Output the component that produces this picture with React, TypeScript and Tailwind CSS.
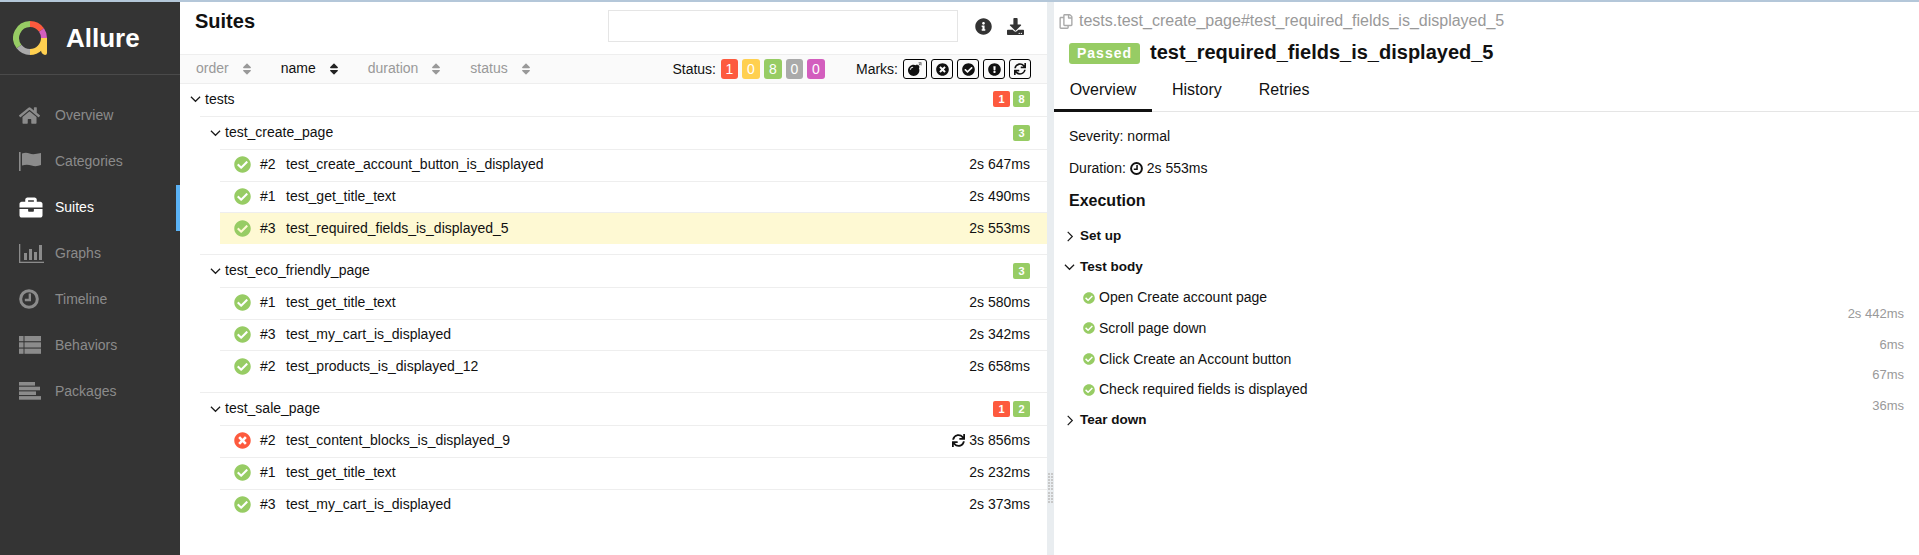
import React from "react";
import {
  FaHome, FaBriefcase,
  FaCheckCircle, FaTimesCircle, FaBomb, FaExclamationCircle, FaSync, FaInfoCircle,
  FaDownload, FaRegCopy, FaSort,
} from "react-icons/fa";

function FlagIcon() {
  return (
    <svg viewBox="0 0 22 19" className="w-[22px] h-[19px]" fill="currentColor">
      <rect x="0" y="0" width="1.6" height="19" />
      <path d="M3 1.5 Q7 0 10.5 1.5 T22 1 V13 Q17 15 12.5 13.5 T3 13.5Z" />
    </svg>
  );
}
function GraphIcon() {
  return (
    <svg viewBox="0 0 25 19" className="w-[25px] h-[19px]" fill="currentColor">
      <rect x="0" y="0" width="1.3" height="19" />
      <rect x="0" y="17.7" width="25" height="1.3" />
      <rect x="5" y="9" width="3" height="7" />
      <rect x="10" y="5" width="3" height="11" />
      <rect x="15" y="8" width="3" height="8" />
      <rect x="20" y="1" width="3" height="15" />
    </svg>
  );
}
function ClockIcon({ className = "w-[20px] h-[20px]" }: { className?: string }) {
  return (
    <svg viewBox="0 0 24 24" className={className} fill="none" stroke="currentColor">
      <circle cx="12" cy="12" r="10" strokeWidth="3.6" />
      <path d="M13 5.5 V13.2 H7" strokeWidth="2.8" />
    </svg>
  );
}
function ListIcon() {
  return (
    <svg viewBox="0 0 22 18" className="w-[22px] h-[18px]" fill="currentColor">
      {[0, 6.3, 12.6].map((y) => (
        <g key={y}>
          <rect x="0" y={y} width="4.5" height="5.2" />
          <rect x="5.5" y={y} width="16.5" height="5.2" />
        </g>
      ))}
    </svg>
  );
}
function PackagesIcon() {
  return (
    <svg viewBox="0 0 22 18" className="w-[22px] h-[18px]" fill="currentColor">
      <rect x="0" y="0" width="16" height="3.6" />
      <rect x="0" y="4.7" width="21" height="3.6" />
      <rect x="0" y="9.4" width="17" height="3.6" />
      <rect x="0" y="14.1" width="22" height="3.6" />
    </svg>
  );
}
function HomeIcon() {
  return <FaHome className="w-[21px] h-[19px]" />;
}
function SuitesIcon() {
  return <FaBriefcase className="w-[24px] h-[23px]" />;
}

const nav = [
  { label: "Overview", icon: <HomeIcon /> },
  { label: "Categories", icon: <FlagIcon /> },
  { label: "Suites", icon: <SuitesIcon />, active: true },
  { label: "Graphs", icon: <GraphIcon /> },
  { label: "Timeline", icon: <ClockIcon /> },
  { label: "Behaviors", icon: <ListIcon /> },
  { label: "Packages", icon: <PackagesIcon /> },
];

function Down() {
  return (
    <svg viewBox="0 0 12 8" className="w-[11px] h-[8px] shrink-0" fill="none" stroke="#1a1a1a" strokeWidth="1.3">
      <path d="M1 1.5 L6 6.5 L11 1.5" />
    </svg>
  );
}
function Right() {
  return (
    <svg viewBox="0 0 8 12" className="w-[8px] h-[11px] shrink-0" fill="none" stroke="#1a1a1a" strokeWidth="1.3">
      <path d="M1.5 1 L6.5 6 L1.5 11" />
    </svg>
  );
}

function Badge({ n, c, big, w }: { n: number; c: string; big?: boolean; w?: string }) {
  return big ? (
    <span className={"h-[20px] rounded-[3px] text-white text-[14px] leading-[20px] text-center " + (w ?? "w-[18px]") + " " + c}>{n}</span>
  ) : (
    <span className={"w-[17px] h-[16px] rounded-[2px] text-white text-[11px] font-bold leading-[16px] text-center " + c}>{n}</span>
  );
}

function Sort({ label, active }: { label: string; active?: boolean }) {
  return (
    <span className={"flex items-center gap-[13px] " + (active ? "text-[#111]" : "text-[#999]")}>
      {label}
      <FaSort className="w-[10px] h-[14px]" color={active ? "#222" : "#999"} />
    </span>
  );
}

function Mark({ children, w = "w-[22px]" }: { children: React.ReactNode; w?: string }) {
  return (
    <span className={"h-[20px] border border-black rounded-[3px] flex items-center justify-center " + w}>{children}</span>
  );
}

type T = { id: string; name: string; time: string; failed?: boolean; retried?: boolean; selected?: boolean };

function TestRow({ t }: { t: T }) {
  return (
    <div className={"ml-[40px] h-[31.7px] border-t border-[#eeeeee] flex items-center pl-[14px] pr-[17px] pb-[1px] " + (t.selected ? "bg-[#fef9d3]" : "")}>
      {t.failed ? (
        <FaTimesCircle className="w-[17px] h-[17px] text-[#fd5a3e]" />
      ) : (
        <FaCheckCircle className="w-[17px] h-[17px] text-[#97cc64]" />
      )}
      <span className="ml-[9px] w-[26px]">{t.id}</span>
      <span>{t.name}</span>
      <span className="ml-auto flex items-center gap-[4px]">
        {t.retried && <FaSync className="w-[13px] h-[13px]" />}
        {t.time}
      </span>
    </div>
  );
}

function Group({ name, badges, tests }: { name: string; badges: React.ReactNode; tests: T[] }) {
  return (
    <div className="mb-[10px]">
      <div className="ml-[20px] h-[33px] border-t border-[#eeeeee] flex items-center pl-[10px] pr-[17px] pb-[1px]">
        <Down />
        <span className="ml-[4px]">{name}</span>
        <span className="ml-auto flex gap-[3px]">{badges}</span>
      </div>
      {tests.map((t) => (
        <TestRow key={t.id + t.name} t={t} />
      ))}
    </div>
  );
}

const G = "bg-[#97cc64]";
const R = "bg-[#fd5a3e]";

function Step({ name, time }: { name: string; time: string }) {
  return (
    <div className="h-[30.7px] flex items-center pl-[29px] pr-[15px]">
      <FaCheckCircle className="w-[12px] h-[12px] text-[#97cc64] mr-[4px]" />
      <span className="text-[14px]">{name}</span>
      <span className="ml-auto text-[13px] text-[#999] translate-y-[16px]">{time}</span>
    </div>
  );
}

function Stage({ name, open }: { name: string; open?: boolean }) {
  return (
    <div className="h-[30.7px] flex items-center pl-[5px] font-bold text-[13.5px]">
      <span className="w-[21px] flex justify-center">{open ? <Down /> : <Right />}</span>
      <span>{name}</span>
    </div>
  );
}

export default function App() {
  return (
    <div className="h-[555px] w-[1919px] overflow-hidden flex flex-col bg-white text-[14px] text-[#111] font-['Liberation_Sans',Arial,sans-serif]">
      <div className="h-[2px] bg-[#b4c7d9]" />
      <div className="flex flex-1 min-h-0">
        {/* Sidebar */}
        <aside className="w-[180px] bg-[#343434] shrink-0">
          <div className="h-[73px] border-b border-[#4a4a4a] flex items-center pl-[13px]">
            <svg viewBox="0 0 34 34" className="w-[34px] h-[34px]">
              <g fill="none" strokeWidth="6">
                <path d="M17 3 A14 14 0 0 1 28.5 9" stroke="#fd5a3e" />
                <path d="M28.5 9 A14 14 0 0 1 31 17" stroke="#d35ebe" />
                <path d="M31 17 A14 14 0 0 1 17 31" stroke="#ffd050" />
                <path d="M17 31 A14 14 0 0 1 6 25.5" stroke="#aaaaaa" />
                <path d="M6 25.5 A14 14 0 0 1 17 3" stroke="#97cc64" />
              </g>
              <path d="M28 17 H34 V32 Q34 34 32 34 Q28 33 28 29Z" fill="#ffd050" />
            </svg>
            <span className="ml-[19px] text-white font-bold text-[26px]">Allure</span>
          </div>
          <nav className="pt-[18px]">
            {nav.map(({ label, icon, active }) => (
              <div key={label} className={"h-[46px] flex items-center pl-[19px] border-r-4 pb-[2px] " + (active ? "border-[#5ab2f5] text-white" : "border-transparent text-[#8b8b8b]")}>
                <span className="w-[36px] flex items-center">{icon}</span>
                <span className="text-[14px]">{label}</span>
              </div>
            ))}
          </nav>
        </aside>

        {/* Left pane */}
        <main className="w-[867px] shrink-0">
          <div className="h-[52px] flex items-start pl-[15px] pr-[22px] pt-[7px]">
            <h2 className="text-[20px] font-bold leading-[24px]">Suites</h2>
            <div className="ml-auto flex items-center pt-[1px]">
              <div className="w-[350px] h-[32px] border border-[#e5e5e5]" />
              <FaInfoCircle className="ml-[17px] w-[17px] h-[17px] text-[#333]" />
              <FaDownload className="ml-[14px] w-[19px] h-[17px] text-[#333]" />
            </div>
          </div>
          <div className="h-[30px] bg-[#fafafa] border-y border-[#eeeeee] flex items-center pl-[16px] pr-[16px]">
            <div className="flex gap-[29px] pb-[1px]">
              <Sort label="order" />
              <Sort label="name" active />
              <Sort label="duration" />
              <Sort label="status" />
            </div>
            <div className="ml-auto flex items-center gap-[4px]">
              <span className="mr-[1px]">Status:</span>
              <Badge big n={1} c={R} w="w-[17px]" />
              <Badge big n={0} c="bg-[#ffd050]" />
              <Badge big n={8} c={G} />
              <Badge big n={0} c="bg-[#aaaaaa]" w="w-[17px]" />
              <Badge big n={0} c="bg-[#d35ebe]" />
              <span className="ml-[27px] mr-[1px]">Marks:</span>
              <Mark w="w-[24px]"><FaBomb className="w-[14px] h-[14px]" /></Mark>
              <Mark><FaTimesCircle className="w-[13px] h-[13px]" /></Mark>
              <Mark><FaCheckCircle className="w-[13px] h-[13px]" /></Mark>
              <Mark><FaExclamationCircle className="w-[13px] h-[13px]" /></Mark>
              <Mark><FaSync className="w-[12px] h-[12px]" /></Mark>
            </div>
          </div>
          <div className="h-[32px] flex items-center pl-[10px] pr-[17px] pb-[2px]">
            <Down />
            <span className="ml-[4px]">tests</span>
            <span className="ml-auto flex gap-[3px]"><Badge n={1} c={R} /><Badge n={8} c={G} /></span>
          </div>
          <Group
            name="test_create_page"
            badges={<Badge n={3} c={G} />}
            tests={[
              { id: "#2", name: "test_create_account_button_is_displayed", time: "2s 647ms" },
              { id: "#1", name: "test_get_title_text", time: "2s 490ms" },
              { id: "#3", name: "test_required_fields_is_displayed_5", time: "2s 553ms", selected: true },
            ]}
          />
          <Group
            name="test_eco_friendly_page"
            badges={<Badge n={3} c={G} />}
            tests={[
              { id: "#1", name: "test_get_title_text", time: "2s 580ms" },
              { id: "#3", name: "test_my_cart_is_displayed", time: "2s 342ms" },
              { id: "#2", name: "test_products_is_displayed_12", time: "2s 658ms" },
            ]}
          />
          <Group
            name="test_sale_page"
            badges={<><Badge n={1} c={R} /><Badge n={2} c={G} /></>}
            tests={[
              { id: "#2", name: "test_content_blocks_is_displayed_9", time: "3s 856ms", failed: true, retried: true },
              { id: "#1", name: "test_get_title_text", time: "2s 232ms" },
              { id: "#3", name: "test_my_cart_is_displayed", time: "2s 373ms" },
            ]}
          />
        </main>

        {/* Splitter */}
        <div className="w-[7px] shrink-0 bg-[#e9edf0] flex justify-center pt-[471px]">
          <div className="grid grid-cols-2 gap-[1px] h-[30px]">
            {Array.from({ length: 20 }).map((_, i) => (
              <span key={i} className="w-[2px] h-[2px] bg-[#c8c8c8]" />
            ))}
          </div>
        </div>

        {/* Right pane */}
        <section className="flex-1 min-w-0">
          <div className="h-[38px] flex items-center pl-[4px] text-[#999] text-[16px]">
            <FaRegCopy className="w-[16px] h-[15px] mr-[5px] text-[#aaa]" />
            tests.test_create_page#test_required_fields_is_displayed_5
          </div>
          <div className="flex items-center pl-[15px] h-[27px]">
            <span className="w-[71px] h-[21px] bg-[#97cc64] rounded-[3px] text-white font-bold text-[14px] tracking-[1px] leading-[21px] text-center">Passed</span>
            <span className="ml-[10px] font-bold text-[20px] pb-[3px]">test_required_fields_is_displayed_5</span>
          </div>
          <div className="h-[39px] mt-[6px] border-b border-[#e5e5e5] flex text-[16px]">
            <span className="w-[98px] border-b-[3px] border-[#111] h-[39px] flex items-center justify-center pb-[2px]">Overview</span>
            <span className="ml-[20px] flex items-center h-[38px] pb-[4px]">History</span>
            <span className="ml-[37px] flex items-center h-[38px] pb-[4px]">Retries</span>
          </div>
          <div className="pl-[15px] mt-[14px] h-[20px] flex items-center">Severity: normal</div>
          <div className="pl-[15px] mt-[12px] h-[20px] flex items-center gap-[4px]">
            Duration: <ClockIcon className="w-[13px] h-[13px]" /> 2s 553ms
          </div>
          <h3 className="pl-[15px] mt-[12px] font-bold text-[16px] h-[22px] leading-[22px]">Execution</h3>
          <div className="mt-[9px]">
            <Stage name="Set up" />
            <Stage name="Test body" open />
            <Step name="Open Create account page" time="2s 442ms" />
            <Step name="Scroll page down" time="6ms" />
            <Step name="Click Create an Account button" time="67ms" />
            <Step name="Check required fields is displayed" time="36ms" />
            <Stage name="Tear down" />
          </div>
        </section>
      </div>
    </div>
  );
}
